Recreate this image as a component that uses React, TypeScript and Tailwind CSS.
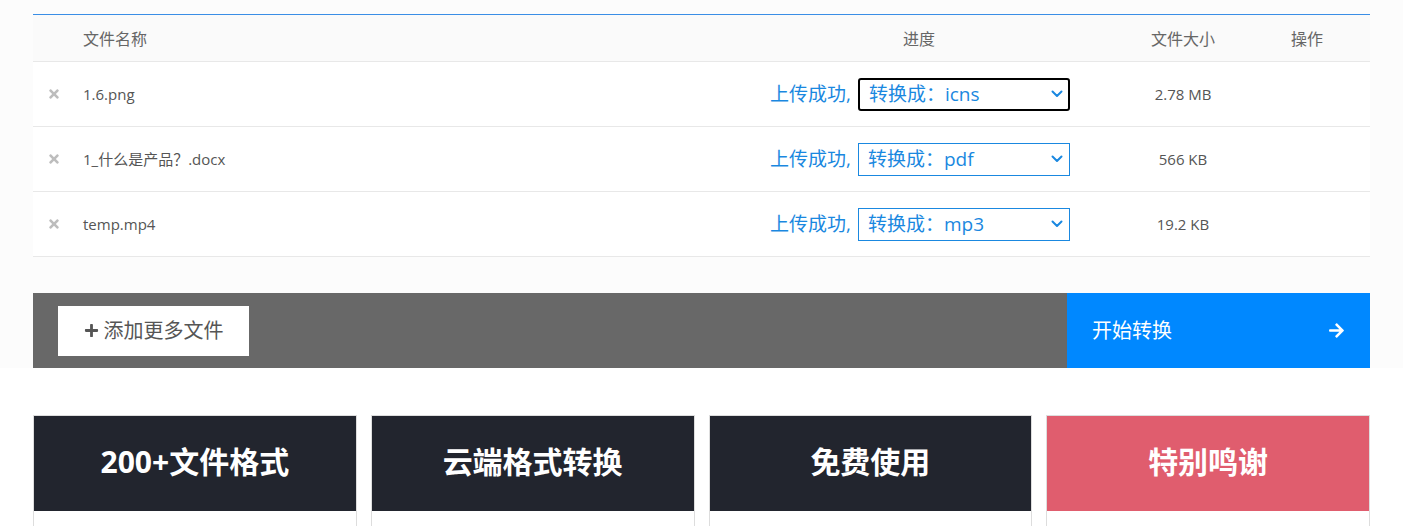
import React from "react";
import { FaTimes, FaPlus, FaArrowRight } from "react-icons/fa";

const font = { fontFamily: '"Open Sans", "Noto Sans CJK SC", sans-serif' };

const files = [
  { name: "1.6.png", target: "icns", size: "2.78 MB", focused: true },
  { name: "1_什么是产品？.docx", target: "pdf", size: "566 KB", focused: false },
  { name: "temp.mp4", target: "mp3", size: "19.2 KB", focused: false },
];

const cards = [
  { title: "200+文件格式", bg: "bg-[#22252e]" },
  { title: "云端格式转换", bg: "bg-[#22252e]" },
  { title: "免费使用", bg: "bg-[#22252e]" },
  { title: "特别鸣谢", bg: "bg-[#e05d6e]" },
];

const Chevron: React.FC = () => (
  <svg className="pointer-events-none absolute right-[7px] top-1/2 -translate-y-1/2" width="12" height="8" viewBox="0 0 12 8">
    <path d="M1.5 1.5 L6 6 L10.5 1.5" fill="none" stroke="#1a88e0" strokeWidth="2" strokeLinecap="round" strokeLinejoin="round" />
  </svg>
);

const App: React.FC = () => {
  return (
    <div className="w-[1403px] bg-white" style={font}>
      <section className="bg-[#fcfcfc] pt-[14px]">
        <div className="mx-[33px] border-t border-[#3a8ee6]">
          <div className="flex h-[47px] items-center border-b border-[#e8e8e8] bg-[#fafafa] pt-[2px] text-[16px] text-[#666]">
            <div className="w-[50px]" />
            <div className="flex-1">文件名称</div>
            <div className="w-[340px] text-center">进度</div>
            <div className="w-[188px] text-center">文件大小</div>
            <div className="w-[60px] text-center">操作</div>
            <div className="w-[33px]" />
          </div>
          {files.map((f) => (
            <div key={f.name} className="flex h-[65px] items-center border-b border-[#e8e8e8] bg-white">
              <div className="flex w-[50px] justify-center pr-[8px]">
                <FaTimes className="h-[14px] w-[14px] text-[#bdbdbd]" />
              </div>
              <div className="flex-1 text-[15px] text-[#555]">{f.name}</div>
              <div className="flex w-[340px] items-center justify-center pl-[2px] text-[19px] text-[#1a88e0]">
                <span className="mr-[7px]">上传成功,</span>
                <div className="relative">
                  <select
                    defaultValue={f.target}
                    className={`h-[33px] w-[212px] appearance-none bg-white pl-[9px] text-[19px] text-[#1a88e0] outline-none ${
                      f.focused ? "rounded-[3px] border-2 border-black pl-[8px]" : "border border-[#1a88e0]"
                    }`}
                  >
                    <option value={f.target}>转换成：{f.target}</option>
                  </select>
                  <Chevron />
                </div>
              </div>
              <div className="w-[188px] text-center text-[15px] text-[#555]">{f.size}</div>
              <div className="w-[60px]" />
              <div className="w-[33px]" />
            </div>
          ))}
        </div>
        <div className="mx-[33px] mt-[36px] flex h-[75px]">
          <div className="flex flex-1 items-center bg-[#686868] pl-[25px]">
            <button className="flex h-[50px] w-[191px] items-center justify-center gap-[5px] bg-white text-[20px] text-[#555]">
              <FaPlus className="h-[15px] w-[15px] text-[#555]" />
              <span>添加更多文件</span>
            </button>
          </div>
          <div className="flex w-[303px] items-center justify-between bg-[#0088ff] px-[25px] text-[20px] text-white">
            <span>开始转换</span>
            <FaArrowRight className="h-[17px] w-[17px]" />
          </div>
        </div>
      </section>
      <section className="px-[33px] pt-[47px]">
        <div className="grid grid-cols-4 gap-[14px]">
          {cards.map((c) => (
            <div key={c.title} className="h-[111px] border-x border-t border-[#dddddd] bg-white">
              <div className={`flex h-[95px] items-center justify-center pb-[5px] ${c.bg} text-[30px] font-bold text-white`}>
                {c.title}
              </div>
            </div>
          ))}
        </div>
      </section>
    </div>
  );
};

export default App;
